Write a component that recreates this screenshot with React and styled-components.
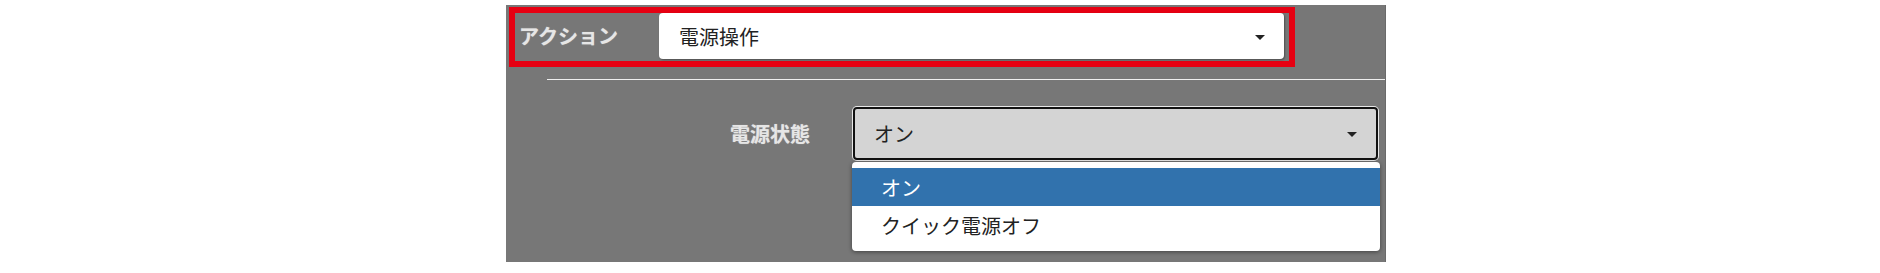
import React from "react";
import styled, { createGlobalStyle } from "styled-components";

const Global = createGlobalStyle`
  html, body { margin: 0; padding: 0; background: #ffffff; }
  body { font-family: "Noto Sans CJK JP", "Noto Sans", sans-serif; }
`;

const Page = styled.div`
  padding: 5px 0 0 506px;
`;

const Panel = styled.div`
  width: 880px;
  height: 257px;
  background: #777777;
  box-sizing: border-box;
  padding-top: 2px;
  display: flex;
  flex-direction: column;
  border-right: 1px solid #6a6a6a;
`;

const ActionRow = styled.div`
  margin-left: 3px;
  width: 786px;
  height: 60px;
  box-sizing: border-box;
  border: 6px solid #e60012;
  display: flex;
  align-items: flex-start;
`;

const Label = styled.div`
  font-size: 20px;
  font-weight: 700;
  color: #e6e6e6;
  text-shadow: 0 0 1px rgba(255, 255, 255, 0.5);
  white-space: nowrap;
`;

const ActionLabel = styled(Label)`
  width: 144px;
  box-sizing: border-box;
  padding-left: 4px;
  line-height: 46px;
`;

const Select = styled.div`
  position: relative;
  box-sizing: border-box;
  display: flex;
  align-items: center;
  justify-content: space-between;
  font-size: 20px;
  color: #222;
  border-radius: 4px;
  background: ${(p) => (p.$focused ? "#d4d4d4" : "#ffffff")};
  border: ${(p) => (p.$focused ? "2px solid #111" : "none")};
  box-shadow: ${(p) =>
    p.$focused ? "0 0 0 1px #e8e8e8" : "1px 1px 2px rgba(0,0,0,0.35)"};
  padding: ${(p) => (p.$focused ? "0 19px 0 19px" : "0 19px 0 20px")};
`;

const Arrow = styled.span`
  width: 0;
  height: 0;
  border-left: 5px solid transparent;
  border-right: 5px solid transparent;
  border-top: 5px solid #222;
  margin-top: 2px;
`;

const ActionSelect = styled(Select)`
  width: 625px;
  height: 46px;
`;

const Divider = styled.div`
  margin: 12px 0 0 41px;
  height: 1px;
  background: #eeeeee;
`;

const FormRow = styled.div`
  margin-top: 27px;
  display: grid;
  grid-template-columns: 304px 525px;
  column-gap: 43px;
  align-items: center;
`;

const FieldLabel = styled(Label)`
  text-align: right;
`;

const SelectWrap = styled.div`
  position: relative;
`;

const StateSelect = styled(Select)`
  width: 525px;
  height: 53px;
`;

const Menu = styled.ul`
  position: absolute;
  left: -1px;
  top: 55px;
  width: 528px;
  height: 89px;
  margin: 0;
  padding: 6px 0;
  box-sizing: border-box;
  list-style: none;
  background: #ffffff;
  border-radius: 4px;
  box-shadow: 0 1px 4px rgba(0, 0, 0, 0.45);
  z-index: 2;
`;

const Option = styled.li`
  height: 38px;
  box-sizing: border-box;
  padding-left: 29px;
  display: flex;
  align-items: center;
  font-size: 20px;
  background: ${(p) => (p.$active ? "#3172ad" : "transparent")};
  color: ${(p) => (p.$active ? "#ffffff" : "#222")};
`;

export default function App() {
  return (
    <>
      <Global />
      <Page>
        <Panel>
          <ActionRow>
            <ActionLabel>アクション</ActionLabel>
            <ActionSelect>
              <span>電源操作</span>
              <Arrow />
            </ActionSelect>
          </ActionRow>
          <Divider />
          <FormRow>
            <FieldLabel>電源状態</FieldLabel>
            <SelectWrap>
              <StateSelect $focused>
                <span>オン</span>
                <Arrow />
              </StateSelect>
              <Menu>
                <Option $active>オン</Option>
                <Option>クイック電源オフ</Option>
              </Menu>
            </SelectWrap>
          </FormRow>
        </Panel>
      </Page>
    </>
  );
}
